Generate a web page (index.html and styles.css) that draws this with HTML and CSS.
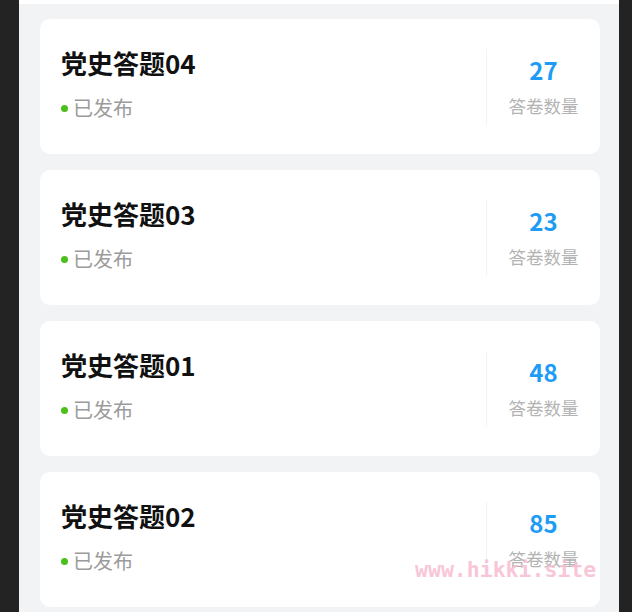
FILE: index.html
```html
<!DOCTYPE html>
<html lang="zh">
<head>
<meta charset="utf-8">
<link rel="stylesheet" href="styles.css">
</head>
<body>
<div class="frame">
  <div class="topbar"></div>
  <div class="list">
    <div class="card">
      <div class="info">
        <div class="title">党史答题04</div>
        <div class="status"><span class="dot"></span>已发布</div>
      </div>
      <div class="stat">
        <div class="num">27</div>
        <div class="label">答卷数量</div>
      </div>
    </div>
    <div class="card">
      <div class="info">
        <div class="title">党史答题03</div>
        <div class="status"><span class="dot"></span>已发布</div>
      </div>
      <div class="stat">
        <div class="num">23</div>
        <div class="label">答卷数量</div>
      </div>
    </div>
    <div class="card">
      <div class="info">
        <div class="title">党史答题01</div>
        <div class="status"><span class="dot"></span>已发布</div>
      </div>
      <div class="stat">
        <div class="num">48</div>
        <div class="label">答卷数量</div>
      </div>
    </div>
    <div class="card">
      <div class="info">
        <div class="title">党史答题02</div>
        <div class="status"><span class="dot"></span>已发布</div>
      </div>
      <div class="stat">
        <div class="num">85</div>
        <div class="label">答卷数量</div>
      </div>
    </div>
  </div>
</div>
<div class="watermark">www.hikki.site</div>
</body>
</html>
```
FILE: styles.css
```css
html, body {
  margin: 0;
  padding: 0;
  background: #232323;
  height: 612px;
  overflow: hidden;
}
body {
  font-family: "Noto Sans CJK SC", "Noto Sans", sans-serif;
  position: relative;
}
.frame {
  margin-left: 19px;
  width: 600px;
  height: 612px;
  background: #f2f3f5;
}
.topbar {
  height: 4px;
  background: #ffffff;
}
.list {
  padding: 15px 19px 0 21px;
  display: flex;
  flex-direction: column;
  gap: 16px;
}
.card {
  height: 135px;
  background: #ffffff;
  border-radius: 10px;
  display: flex;
  align-items: flex-start;
}
.info {
  flex: 1;
  padding: 28px 0 0 21px;
}
.title {
  font-size: 26px;
  line-height: 32px;
  font-weight: 600;
  color: #111111;
}
.status {
  margin-top: 17px;
  font-size: 20px;
  line-height: 24px;
  color: #9b9b9b;
  display: flex;
  align-items: center;
}
.dot {
  width: 7px;
  height: 7px;
  border-radius: 50%;
  background: #4bbf1a;
  margin: 0 5px 0 0;
}
.stat {
  width: 113px;
  margin-top: 30px;
  height: 76px;
  border-left: 1px solid #f3f3f3;
  display: flex;
  flex-direction: column;
  align-items: center;
}
.num {
  margin-top: 7px;
  font-size: 24px;
  line-height: 28px;
  font-weight: 600;
  color: #1e9cf5;
}
.label {
  margin-top: 11px;
  font-size: 17.5px;
  line-height: 22px;
  color: #b3b3b3;
}
.watermark {
  position: absolute;
  left: 415px;
  top: 555px;
  font-family: "DejaVu Sans Mono", monospace;
  font-size: 21.5px;
  font-weight: 700;
  line-height: 30px;
  color: #f7bdd1;
  opacity: 0.85;
}
```
